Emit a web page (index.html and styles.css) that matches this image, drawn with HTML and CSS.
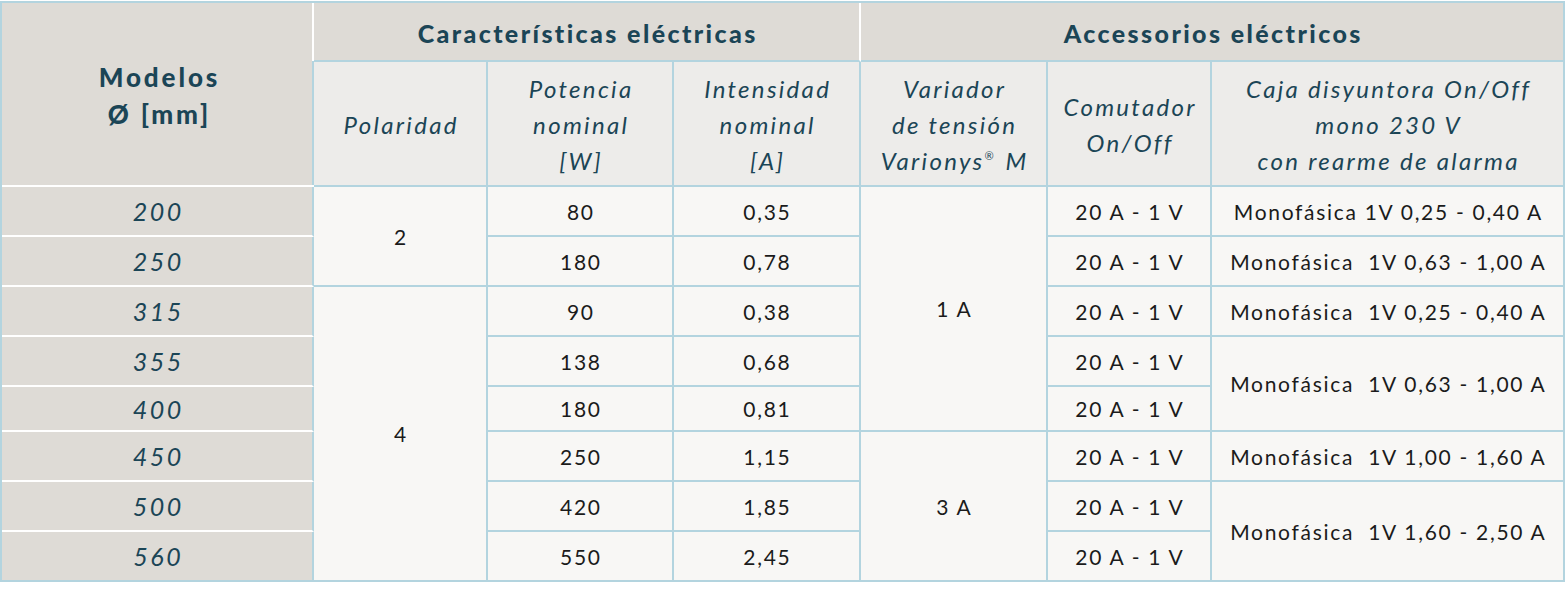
FILE: index.html
```html
<!DOCTYPE html>
<html lang="es">
<head>
<meta charset="utf-8">
<title>Características eléctricas</title>
<link rel="stylesheet" href="styles.css">
</head>
<body>
<table class="spec">
  <colgroup>
    <col class="c-model">
    <col class="c-pol">
    <col class="c-pot">
    <col class="c-int">
    <col class="c-var">
    <col class="c-com">
    <col class="c-caja">
  </colgroup>
  <thead>
    <tr class="h-group">
      <th class="model-head" rowspan="2">Modelos<br>Ø [mm]</th>
      <th class="group" colspan="3">Características eléctricas</th>
      <th class="group last" colspan="3">Accessorios eléctricos</th>
    </tr>
    <tr class="h-sub">
      <th class="sub">Polaridad</th>
      <th class="sub">Potencia<br>nominal<br>[W]</th>
      <th class="sub">Intensidad<br>nominal<br>[A]</th>
      <th class="sub">Variador<br>de tensión<br>Varionys<sup>®</sup> M</th>
      <th class="sub">Comutador<br>On/Off</th>
      <th class="sub">Caja disyuntora On/Off<br>mono 230 V<br>con rearme de alarma</th>
    </tr>
  </thead>
  <tbody>
    <tr class="r">
      <th class="model">200</th>
      <td rowspan="2">2</td>
      <td>80</td>
      <td>0,35</td>
      <td rowspan="5">1 A</td>
      <td>20 A - 1 V</td>
      <td>Monofásica 1V 0,25 - 0,40 A</td>
    </tr>
    <tr class="r">
      <th class="model">250</th>
      <td>180</td>
      <td>0,78</td>
      <td>20 A - 1 V</td>
      <td>Monofásica&nbsp; 1V 0,63 - 1,00 A</td>
    </tr>
    <tr class="r">
      <th class="model">315</th>
      <td rowspan="6">4</td>
      <td>90</td>
      <td>0,38</td>
      <td>20 A - 1 V</td>
      <td>Monofásica&nbsp; 1V 0,25 - 0,40 A</td>
    </tr>
    <tr class="r">
      <th class="model">355</th>
      <td>138</td>
      <td>0,68</td>
      <td>20 A - 1 V</td>
      <td rowspan="2">Monofásica&nbsp; 1V 0,63 - 1,00 A</td>
    </tr>
    <tr class="r short">
      <th class="model">400</th>
      <td>180</td>
      <td>0,81</td>
      <td>20 A - 1 V</td>
    </tr>
    <tr class="r">
      <th class="model">450</th>
      <td>250</td>
      <td>1,15</td>
      <td rowspan="3">3 A</td>
      <td>20 A - 1 V</td>
      <td>Monofásica&nbsp; 1V 1,00 - 1,60 A</td>
    </tr>
    <tr class="r">
      <th class="model">500</th>
      <td>420</td>
      <td>1,85</td>
      <td>20 A - 1 V</td>
      <td rowspan="2">Monofásica&nbsp; 1V 1,60 - 2,50 A</td>
    </tr>
    <tr class="r">
      <th class="model last-row">560</th>
      <td>550</td>
      <td>2,45</td>
      <td>20 A - 1 V</td>
    </tr>
  </tbody>
</table>
</body>
</html>
```
FILE: styles.css
```css
html, body {
  margin: 0;
  padding: 0;
  background: #ffffff;
}

.spec {
  margin-top: 1px;
  border-collapse: separate;
  border-spacing: 0;
  table-layout: fixed;
  width: 1565px;
  border-top: 2px solid #b3d4df;
  border-left: 2px solid #b3d4df;
  font-family: Lato, "Noto Sans", sans-serif;
}

.c-model { width: 312px; }
.c-pol { width: 174px; }
.c-pot { width: 186px; }
.c-int { width: 187px; }
.c-var { width: 187px; }
.c-com { width: 164px; }
.c-caja { width: 353px; }

.spec th,
.spec td {
  box-sizing: border-box;
  padding: 0;
  text-align: center;
  vertical-align: middle;
  border-right: 2px solid #b3d4df;
  border-bottom: 2px solid #b3d4df;
}

.spec td {
  background: #f8f7f5;
  color: #1b1b1b;
  font-size: 21px;
  font-weight: 400;
  letter-spacing: 1.7px;
  padding-left: 1.7px;
  white-space: nowrap;
}

.h-group { height: 59px; }
.h-sub { height: 125px; }
.r { height: 50px; }
.r.short { height: 45px; }

.model-head {
  border-right: 0 !important;
  border-bottom-color: #ffffff !important;
  background:
    linear-gradient(to bottom, #ffffff 0, #ffffff 58px, #b3d4df 58px) right top / 2px 100% no-repeat,
    #dedbd6;
  color: #1b4556;
  font-size: 26px;
  font-weight: 900;
  letter-spacing: 2.9px;
  padding-left: 2.9px !important;
  padding-top: 3px !important;
  line-height: 37px;
}

.group {
  background: #dedbd6;
  color: #1b4556;
  font-size: 25px;
  font-weight: 900;
  letter-spacing: 2.4px;
  padding-left: 2.4px !important;
  border-right-color: #ffffff !important;
  padding-top: 2px !important;
}

.group.last {
  border-right-color: #b3d4df !important;
}

.sub {
  background: #edecea;
  color: #1b4556;
  font-size: 24px;
  font-style: italic;
  font-weight: 400;
  letter-spacing: 2.3px;
  padding-left: 2.3px !important;
  padding-top: 3px !important;
  line-height: 36px;
  white-space: nowrap;
}

.sub sup {
  font-size: 11px;
  vertical-align: 10px;
  line-height: 0;
  letter-spacing: 0;
  margin-right: 4px;
}

.model {
  background: #dedbd6;
  color: #1b4556;
  font-size: 25px;
  font-style: italic;
  font-weight: 400;
  letter-spacing: 2.6px;
  padding-left: 2.6px !important;
  border-bottom-color: #ffffff !important;
}

.model.last-row {
  border-bottom-color: #b3d4df !important;
}
```
